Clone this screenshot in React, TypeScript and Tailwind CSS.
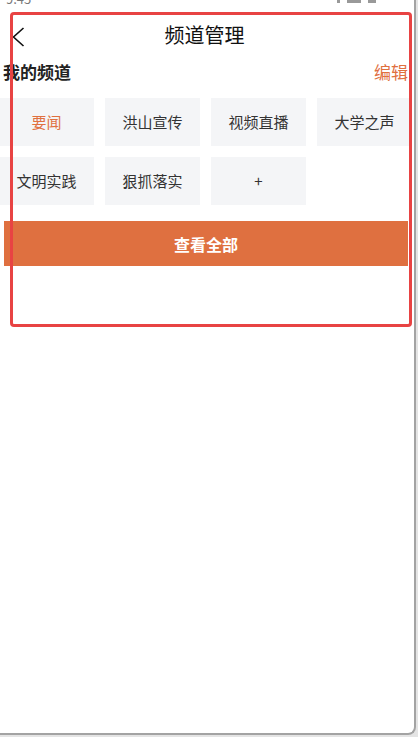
import React from "react";

const tiles = ["要闻", "洪山宣传", "视频直播", "大学之声", "文明实践", "狠抓落实", "+"];

export default function App() {
  return (
    <div
      className="relative w-[418px] h-[737px] overflow-hidden bg-[#e4e4e4]"
      style={{ fontFamily: '"Noto Sans CJK SC", "Noto Sans", sans-serif' }}
    >
      <div className="flex flex-col w-[416px] h-[735px] bg-white rounded-br-[8px] border-r-[2px] border-b-[2px] border-[#a3a3a3]">
        {/* cut-off status bar */}
        <div className="h-[15px] relative overflow-hidden">
          <div className="flex justify-between items-start -mt-[9px] px-[6px] h-[15px] text-[13px] leading-[15px] text-[#777]">
            <span>9:45</span>
            <div className="flex items-start gap-[7px] mr-[32px] mt-[9px]">
              <div className="w-[3px] h-[3px] bg-[#999]" />
              <div className="w-[14px] h-[3px] bg-[#999]" />
              <div className="w-[8px] h-[3px] bg-[#999]" />
            </div>
          </div>
        </div>
        {/* header */}
        <div className="relative h-[40px] flex items-center justify-center pr-[5px]">
          <svg
            className="absolute left-[12px] top-[12px]"
            width="13"
            height="20"
            viewBox="0 0 13 20"
            fill="none"
          >
            <polyline points="11.5,1 1.5,10 11.5,19" stroke="#111" strokeWidth="1.6" />
          </svg>
          <span className="text-[20px] text-[#111] leading-none">频道管理</span>
        </div>
        {/* section title */}
        <div className="h-[34px] flex items-center justify-between pl-[3px] pr-[6px]">
          <span className="text-[17px] font-bold text-[#222]">我的频道</span>
          <span className="text-[17px] text-[#e0703f]">编辑</span>
        </div>
        {/* tiles */}
        <div className="mt-[9px] -ml-[1px] grid grid-cols-[repeat(4,95px)] gap-[11px]">
          {tiles.map((t, i) => (
            <div
              key={t}
              className={`h-[48px] bg-[#f4f5f7] flex items-center justify-center text-[15px] ${
                i === 0 ? "text-[#e0703f]" : "text-[#333]"
              }`}
            >
              {t}
            </div>
          ))}
        </div>
        {/* button */}
        <div className="mt-[16px] ml-[4px] w-[404px] h-[45px] bg-[#df7040] flex items-center justify-center">
          <span className="text-[16px] font-bold text-white">查看全部</span>
        </div>
      </div>
      {/* red annotation frame overlay */}
      <div className="absolute left-[10px] top-[12px] w-[402px] h-[315px] border-[3px] border-[#e84343] rounded-[4px] pointer-events-none" />
    </div>
  );
}
